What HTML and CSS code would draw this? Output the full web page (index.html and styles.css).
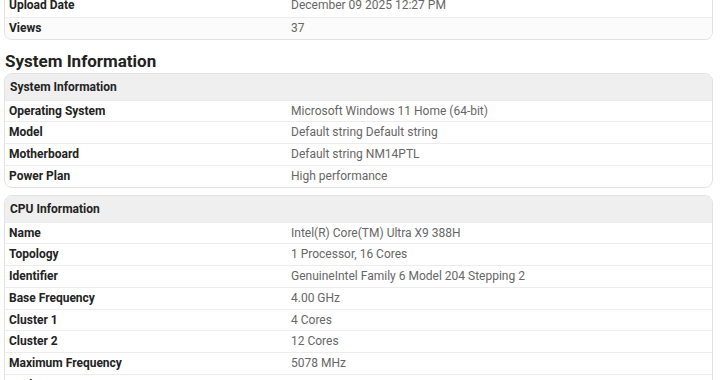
FILE: index.html
```html
<!DOCTYPE html>
<html>
<head>
<meta charset="utf-8">
<link rel="stylesheet" href="styles.css">
</head>
<body>
<div class="page">
  <div class="card card-top">
    <div class="row"><div class="label">Upload Date</div><div class="value">December 09 2025 12:27 PM</div></div>
    <div class="row"><div class="label">Views</div><div class="value">37</div></div>
  </div>

  <h2 class="section-title">System Information</h2>

  <div class="card">
    <div class="card-head">System Information</div>
    <div class="row"><div class="label">Operating System</div><div class="value">Microsoft Windows 11 Home (64-bit)</div></div>
    <div class="row"><div class="label">Model</div><div class="value">Default string Default string</div></div>
    <div class="row"><div class="label">Motherboard</div><div class="value">Default string NM14PTL</div></div>
    <div class="row"><div class="label">Power Plan</div><div class="value">High performance</div></div>
  </div>

  <div class="card">
    <div class="card-head">CPU Information</div>
    <div class="row"><div class="label">Name</div><div class="value">Intel(R) Core(TM) Ultra X9 388H</div></div>
    <div class="row"><div class="label">Topology</div><div class="value">1 Processor, 16 Cores</div></div>
    <div class="row"><div class="label">Identifier</div><div class="value">GenuineIntel Family 6 Model 204 Stepping 2</div></div>
    <div class="row"><div class="label">Base Frequency</div><div class="value">4.00 GHz</div></div>
    <div class="row"><div class="label">Cluster 1</div><div class="value">4 Cores</div></div>
    <div class="row"><div class="label">Cluster 2</div><div class="value">12 Cores</div></div>
    <div class="row"><div class="label">Maximum Frequency</div><div class="value">5078 MHz</div></div>
    <div class="row"><div class="label">Package</div><div class="value"></div></div>
  </div>
</div>
</body>
</html>
```

FILE: styles.css
```css
html, body {
  margin: 0;
  padding: 0;
  background: #ffffff;
}
body {
  font-family: Roboto, "Liberation Sans", Arial, sans-serif;
  color: #222;
  font-size: 12px;
  overflow: hidden;
  height: 380px;
}
.page {
  padding: 0 7px 0 4px;
  margin-top: -5px;
}
.card {
  border: 1px solid #e2e2e2;
  border-radius: 8px;
  overflow: hidden;
  background: #fff;
  margin-bottom: 7px;
}
.card-top {
  border-top: none;
  border-radius: 0 0 8px 8px;
  margin-bottom: 0;
}
.card-head {
  background: #efefef;
  font-weight: 700;
  font-size: 12px;
  line-height: 27px;
  height: 26px;
  padding: 0 5px;
  color: #222;
}
.row {
  display: grid;
  grid-template-columns: 282px 1fr;
  height: 21.75px;
  line-height: 21px;
  border-top: 1px solid #ececec;
  box-sizing: border-box;
  padding: 0 4px;
}
.card-top .row:first-child {
  border-top: none;
}
.card-top .row:last-child {
  background: #fbfbfb;
}
.label {
  font-weight: 700;
  color: #222;
  white-space: nowrap;
}
.value {
  color: #666;
  white-space: nowrap;
}
.section-title {
  font-size: 17px;
  font-weight: 700;
  margin: 10px 0 0 1px;
  line-height: 22px;
  height: 22px;
  padding-bottom: 1px;
  color: #222;
}
```
